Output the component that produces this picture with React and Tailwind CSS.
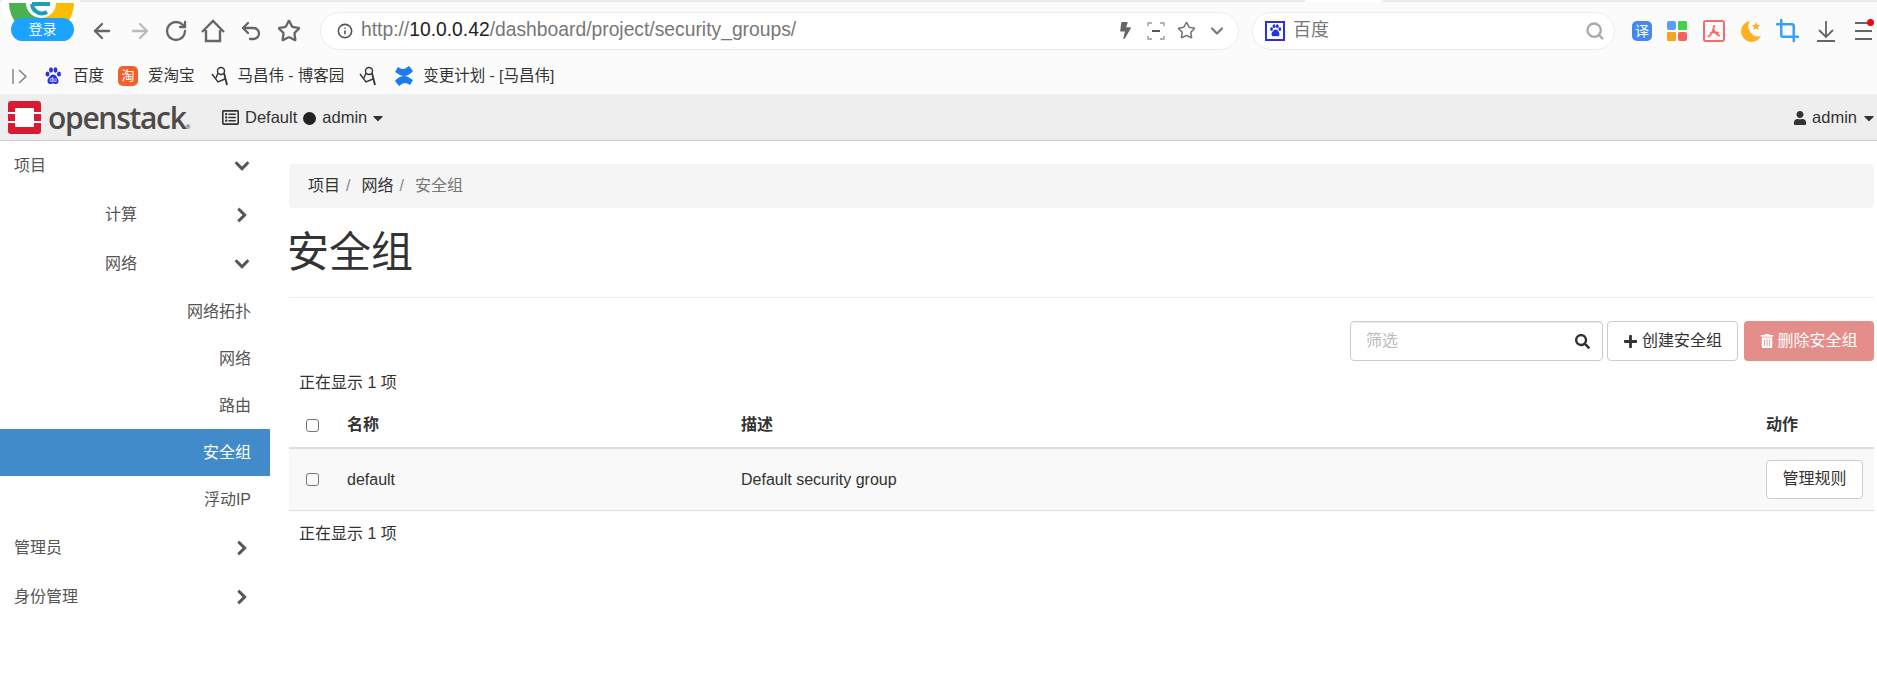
import React from 'react';
import { ArrowLeft, ArrowRight, RotateCw, Undo2, Star, Info, ChevronDown, Search, Crop } from 'lucide-react';
import { FaChevronDown, FaChevronRight, FaSearch, FaPlus, FaTrashAlt, FaUser, FaCaretDown, FaBolt, FaRegListAlt } from 'react-icons/fa';

const FONT = "font-['Liberation_Sans','Noto_Sans_CJK_SC',sans-serif]";

const Feather = () => (
  <svg width="18" height="20" viewBox="0 0 18 20" fill="none" stroke="#333" strokeWidth="1.400">
    <path d="M1 8l6 8 7-3" />
    <circle cx="10" cy="5" r="3.500" />
    <path d="M13 7l3 12" strokeWidth="1.800" />
    <path d="M7 7l-2 5" />
  </svg>
);

const BaiduPaw = ({ size = 18, du }) => (
  <svg width={size} height={size} viewBox="0 0 18 18" fill="#2932e1">
    <ellipse cx="3.500" cy="7" rx="2" ry="2.600" />
    <ellipse cx="7" cy="3" rx="2" ry="2.700" />
    <ellipse cx="11.500" cy="3" rx="2" ry="2.700" />
    <ellipse cx="15" cy="7" rx="2" ry="2.600" />
    <path d="M9 7.500c-2 0-3 2-4.500 3.500S3 17 6 17c1.500 0 2-.5 3-.5s1.500.5 3 .5c3 0 3-3.500 1.500-6S11 7.500 9 7.500z" />
    {du && <text x="9" y="15" fontSize="6.500" fill="#fff" textAnchor="middle">du</text>}
  </svg>
);

const BrowserLogo = () => (
  <div className="absolute left-0 top-0 w-[82px] h-[42px]">
    <svg width="82" height="42" viewBox="0 0 82 42">
      <circle cx="41" cy="3" r="39" fill="#fff" />
      <path d="M41 3H9a32 32 0 0 0 32 32z" fill="#4caf50" />
      <path d="M41 3h33a33 33 0 0 1-33 33z" fill="#fbbc05" />
      <circle cx="41" cy="3" r="15" fill="#fff" />
      <path d="M32 4h18M47 12a10 10 0 0 1-15-8" fill="none" stroke="#1aa0b8" strokeWidth="4" />
    </svg>
    <div className="absolute left-[11px] top-[18px] w-[63px] h-[23px] rounded-full bg-[#1aa3ff] text-white text-[14px] flex items-center justify-center">登录</div>
  </div>
);

const Toolbar = () => (
  <div className="h-[56px] flex items-center pt-[1px] text-[#666]">
    <ArrowLeft size={24} strokeWidth={2.300} className="ml-[90px]" />
    <ArrowRight size={24} strokeWidth={2.300} className="ml-[14px] text-[#bbb]" />
    <RotateCw size={24} strokeWidth={2.300} className="ml-[12px]" />
    <svg width="26" height="26" viewBox="0 0 26 26" className="ml-[12px]" fill="none" stroke="#666" strokeWidth="2.400">
      <path d="M2 14L13 3l11 11M6 12v11h14V12" />
    </svg>
    <Undo2 size={24} strokeWidth={2.300} className="ml-[13px]" />
    <Star size={24} strokeWidth={2.300} className="ml-[14px]" />
    <div className="ml-[19px] w-[919px] h-[38px] rounded-full border border-[#ececec] bg-white flex items-center">
      <Info size={16} strokeWidth={2.400} className="ml-[16px] text-[#555]" />
      <div className="ml-[8px] text-[19.300px] text-[#777] w-[756px] whitespace-nowrap">
        http://<span className="text-[#222]">10.0.0.42</span>/dashboard/project/security_groups/
      </div>
      <FaBolt size={17} className="text-[#666]" />
      <svg width="18" height="18" viewBox="0 0 18 18" className="ml-[13px]" fill="none" stroke="#999" strokeWidth="1.400">
        <path d="M1 4V1h4M13 1h4v3M17 14v3h-4M5 17H1v-3" />
        <path d="M5 9h8" stroke="#555" strokeWidth="2" />
      </svg>
      <Star size={19} strokeWidth={2} className="ml-[12px] text-[#777]" />
      <ChevronDown size={20} strokeWidth={2.600} className="ml-[11px] text-[#777]" />
    </div>
    <div className="ml-[13px] w-[363px] h-[38px] rounded-full border border-[#ececec] bg-white flex items-center">
      <div className="ml-[12px] w-[20px] h-[20px] border-2 border-[#2932e1] flex items-center justify-center">
        <BaiduPaw size={13} />
      </div>
      <div className="ml-[8px] text-[18px] text-[#777] flex-1">百度</div>
      <Search size={20} strokeWidth={2.800} className="mr-[9px] text-[#aaa]" />
    </div>
    <div className="ml-[17px] w-[20px] h-[20px] rounded-[5px] bg-[#4488f0] text-white text-[14px] leading-[20px] text-center">译</div>
    <svg width="20" height="20" viewBox="0 0 20 20" className="ml-[15px]">
      <rect x="0" y="0" width="9" height="9" rx="2" fill="#5b9cf5" />
      <rect x="11" y="0" width="9" height="9" rx="1" fill="#3dd44a" />
      <rect x="0" y="11" width="9" height="9" rx="1" fill="#f5a623" />
      <rect x="11" y="11" width="9" height="9" rx="2" fill="#f8605c" />
    </svg>
    <svg width="22" height="22" viewBox="0 0 22 22" className="ml-[16px]" fill="none" stroke="#f46d6d" strokeWidth="2">
      <rect x="1" y="1" width="20" height="20" rx="2" />
      <path d="M11 5c0 5-2 9-6 12M11 10c1 3 3 5 6 6M7 13c3-1 6-1 9 0" strokeWidth="1.800" />
    </svg>
    <svg width="22" height="22" viewBox="0 0 22 22" className="ml-[15px]">
      <path d="M10 1a10.500 10.500 0 1 0 11 15A10 10 0 0 1 10 1z" fill="#fdb022" />
      <path d="M16 2l1.300 3h3l-2.400 2 1 3-2.900-1.800L13.100 10l1-3-2.400-2h3z" fill="#fdb022" />
    </svg>
    <Crop size={25} strokeWidth={2.400} className="ml-[13px] text-[#38a1f5]" />
    <svg width="18" height="22" viewBox="0 0 18 22" className="ml-[17px]" fill="none" stroke="#666" strokeWidth="1.800">
      <path d="M9 1v15M2 10l7 7 7-7" />
      <path d="M0 21h18" strokeWidth="2" />
    </svg>
    <div className="relative ml-[20px] w-[17px] h-[18px] flex flex-col justify-between">
      <div className="h-[2px] bg-[#666]" />
      <div className="h-[2px] bg-[#666]" />
      <div className="h-[2px] bg-[#666]" />
      <div className="absolute right-[-2px] top-[-3px] w-[7px] h-[7px] rounded-full bg-[#f00]" />
    </div>
  </div>
);

const Bookmarks = () => (
  <div className="h-[36px] flex items-center text-[15.500px] text-[#333] whitespace-nowrap">
    <svg width="15" height="15" viewBox="0 0 15 15" className="ml-[12px]" fill="none" stroke="#777" strokeWidth="1.300">
      <path d="M1 0v15M7 1l7 6.500-7 6.500" />
    </svg>
    <div className="ml-[17px]"><BaiduPaw du /></div>
    <span className="ml-[11px]">百度</span>
    <div className="ml-[14px] w-[20px] h-[20px] rounded-[5px] bg-[#f4602a] text-white text-[13px] leading-[19px] text-center">淘</div>
    <span className="ml-[10px]">爱淘宝</span>
    <div className="ml-[16px]"><Feather /></div>
    <span className="ml-[9px]">马昌伟 - 博客园</span>
    <div className="ml-[15px]"><Feather /></div>
    <svg width="20" height="20" viewBox="0 0 20 20" className="ml-[17px]" fill="#1d7bf0">
      <path d="M1 15c4-5 9-6 13-4l5 3-3 5c-3-2-6-3-8-1l-3 2z" />
      <path d="M19 5c-4 5-9 6-13 4L1 6l3-5c3 2 6 3 8 1l3-2z" />
    </svg>
    <span className="ml-[9px]">变更计划 - [马昌伟]</span>
  </div>
);

const OpenstackLogo = () => (
  <div className="flex items-center">
    <svg width="33" height="33" viewBox="0 0 33 33" className="ml-[8px]">
      <rect width="33" height="33" rx="3" fill="#da1a32" />
      <rect x="7" y="7" width="19" height="19" rx="1" fill="#fff" />
      <rect x="0" y="11" width="7" height="2" fill="#fff" />
      <rect x="0" y="20" width="7" height="2" fill="#fff" />
      <rect x="26" y="11" width="7" height="2" fill="#fff" />
      <rect x="26" y="20" width="7" height="2" fill="#fff" />
    </svg>
    <span className="ml-[7px] w-[174px] font-['Open_Sans',sans-serif] font-semibold text-[30px] leading-none tracking-[-1.300px] text-[#4d4a48]">openstack<span className="text-[6px] align-baseline">®</span></span>
  </div>
);

const Header = () => (
  <div className="h-[47px] bg-[#eee] border-t border-b border-t-[#f0f0f0] border-b-[#ccc] flex items-center text-[16.500px] text-[#333]">
    <OpenstackLogo />
    <FaRegListAlt size={17} />
    <span className="ml-[6px]">Default</span>
    <span className="ml-[6px] w-[13px] h-[13px] rounded-full bg-[#222] mt-[2px]" />
    <span className="ml-[6px]">admin</span>
    <FaCaretDown size={16} className="ml-[3px]" />
    <div className="ml-auto flex items-center">
      <FaUser size={14} />
      <span className="ml-[5px]">admin</span>
      <FaCaretDown size={16} className="ml-[4px]" />
    </div>
  </div>
);

const NavRow = ({ label, indent, open }) => (
  <div className={`h-[49px] flex items-center text-[16px] text-[#555] ${indent}`}>
    <span className="flex-1 pt-[1px]">{label}</span>
    {open
      ? <FaChevronDown size={16} stroke="currentColor" strokeWidth={24} className="mr-[20px]" />
      : <FaChevronRight size={16} stroke="currentColor" strokeWidth={24} className="mr-[20px]" />}
  </div>
);

const SubRow = ({ label, active }) => (
  <div className={`h-[47px] flex items-center justify-end pr-[19px] pt-[1px] text-[16px] ${active ? 'bg-[#428bca] text-white' : 'text-[#555]'}`}>
    {label}
  </div>
);

const Sidebar = () => (
  <aside className="w-[270px] shrink-0">
    <NavRow label="项目" indent="pl-[14px]" open />
    <NavRow label="计算" indent="pl-[105px]" />
    <NavRow label="网络" indent="pl-[105px]" open />
    <SubRow label="网络拓扑" />
    <SubRow label="网络" />
    <SubRow label="路由" />
    <SubRow label="安全组" active />
    <SubRow label="浮动IP" />
    <NavRow label="管理员" indent="pl-[14px]" />
    <NavRow label="身份管理" indent="pl-[14px]" />
  </aside>
);

const Content = () => (
  <main className="flex-1 pl-[19px] pr-[3px] text-[#333] text-[16px]">
    <div className="mt-[23px] h-[44px] rounded-[4px] bg-[#f5f5f5] flex items-center pl-[19px]">
      <span>项目</span>
      <span className="ml-[6px] text-[#888]">/</span>
      <span className="ml-[11px]">网络</span>
      <span className="ml-[6px] text-[#888]">/</span>
      <span className="ml-[11px] text-[#777]">安全组</span>
    </div>
    <div className="h-[90px] border-b border-[#eee] flex items-center">
      <h1 className="text-[42px] font-normal leading-none -ml-[2px]">安全组</h1>
    </div>
    <div className="mt-[23px] h-[40px] flex justify-end">
      <div className="w-[253px] rounded-[4px] border border-[#ccc] shadow-[inset_0_1px_1px_rgba(0,0,0,0.075)] flex items-center pl-[15px] pr-[12px]">
        <span className="flex-1 text-[#bbb]">筛选</span>
        <FaSearch size={15} />
      </div>
      <div className="ml-[4px] w-[131px] rounded-[4px] border border-[#ccc] flex items-center justify-center">
        <FaPlus size={15} />
        <span className="ml-[4px]">创建安全组</span>
      </div>
      <div className="ml-[6px] w-[130px] rounded-[4px] bg-[#e48e8c] text-white flex items-center justify-center">
        <FaTrashAlt size={14} />
        <span className="ml-[3px]">删除安全组</span>
      </div>
    </div>
    <div className="mt-[10px] h-[24px] pl-[10px] flex items-center">正在显示 1 项</div>
    <table className="w-full table-fixed border-collapse">
      <thead>
        <tr className="h-[53px] border-b-2 border-[#ddd]">
          <th className="w-[58px] pl-[17px] pt-[8px] text-left font-normal">
            <input type="checkbox" readOnly className="block w-[13px] h-[13px] appearance-none rounded-[3px] border border-[#767676]" />
          </th>
          <th className="w-[394px] pt-[8px] text-left font-bold">名称</th>
          <th className="pt-[8px] text-left font-bold">描述</th>
          <th className="w-[108px] pt-[8px] text-left font-bold">动作</th>
        </tr>
      </thead>
      <tbody>
        <tr className="h-[62px] bg-[#f9f9f9] border-b border-[#ddd]">
          <td className="pl-[17px] pt-[1px]">
            <input type="checkbox" readOnly className="block w-[13px] h-[13px] appearance-none rounded-[3px] border border-[#767676]" />
          </td>
          <td className="pt-[1px]">default</td>
          <td className="pt-[1px]">Default security group</td>
          <td>
            <div className="w-[97px] h-[39px] rounded-[4px] border border-[#ccc] bg-white flex items-center justify-center">管理规则</div>
          </td>
        </tr>
      </tbody>
    </table>
    <div className="mt-[11px] h-[24px] pl-[10px] flex items-center">正在显示 1 项</div>
  </main>
);

export default function App() {
  return (
    <div className={`relative h-[681px] overflow-hidden bg-white ${FONT}`}>
      <div className="bg-[#fbfbfb]">
        <div className="h-[2px] bg-[#ebebeb] flex">
          <div className="ml-[1305px] w-[77px] bg-white" />
        </div>
        <Toolbar />
        <Bookmarks />
      </div>
      <BrowserLogo />
      <Header />
      <div className="flex">
        <Sidebar />
        <Content />
      </div>
    </div>
  );
}
